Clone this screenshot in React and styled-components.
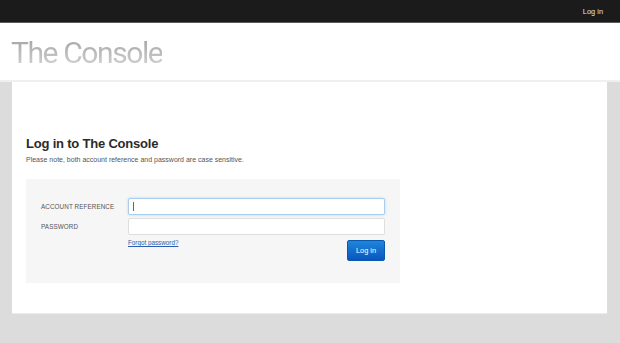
import React from 'react';
import styled, { createGlobalStyle } from 'styled-components';

const GlobalStyle = createGlobalStyle`
  html, body {
    margin: 0;
    padding: 0;
    background: #dcdcdc;
    font-family: "Liberation Sans", Arial, sans-serif;
  }
`

const Page = styled.div`
  min-height: 343px;
  background: #dcdcdc;
`

const TopBar = styled.div`
  height: 22px;
  background: #1b1b1b;
  border-bottom: 1px solid #5a5a5a;
  display: flex;
  align-items: center;
  justify-content: flex-end;
  padding: 0 17px;
`

const TopLink = styled.a`
  color: #e4e4e4;
  font-size: 7.4px;
  text-decoration: none;
`

const Header = styled.div`
  height: 57px;
  background: #fff;
  border-bottom: 2px solid #efefef;
  display: flex;
  align-items: center;
  padding: 0 11px;
`

const Logo = styled.div`
  font-family: Roboto, "Liberation Sans", sans-serif;
  font-weight: 400;
  font-size: 30px;
  letter-spacing: -1.4px;
  line-height: 1;
  margin-top: 2px;
  background: linear-gradient(#a4a4a4, #d4d4d4);
  -webkit-background-clip: text;
  background-clip: text;
  color: transparent;
`

const Panel = styled.div`
  margin: 0 13px 0 12px;
  background: #fff;
  border-bottom: 1px solid #ececec;
  padding: 53px 14px 30px;
`

const Title = styled.h1`
  margin: 0;
  font-size: 13px;
  font-weight: bold;
  color: #2b2b2b;
  letter-spacing: -0.2px;
  line-height: 18px;
`

const Note = styled.p`
  margin: 2px 0 0;
  font-size: 7px;
  color: #555;
  line-height: 10px;
`

const FormBox = styled.form`
  margin-top: 14px;
  width: 374px;
  height: 104px;
  box-sizing: border-box;
  background: #f6f6f6;
  padding: 19px 15px 0;
`

const Row = styled.div`
  display: flex;
  align-items: center;
  margin-bottom: 3px;
`

const Label = styled.label`
  width: 87px;
  flex: none;
  font-size: 6.3px;
  color: #555;
  letter-spacing: 0.1px;
`

const Field = styled.div`
  position: relative;
  flex: 1;
`

const Input = styled.input`
  display: block;
  width: 100%;
  height: 17px;
  box-sizing: border-box;
  border: 1px solid ${p => (p.$focused ? '#a9cdee' : '#dedede')};
  border-radius: 2px;
  box-shadow: ${p => (p.$focused ? '0 0 3px #b8d8f3' : 'none')};
  background: #fff;
  outline: none;
  padding: 0 4px;
`

const Caret = styled.span`
  position: absolute;
  left: 5px;
  top: 4px;
  width: 1px;
  height: 9px;
  background: #666;
`

const Actions = styled.div`
  display: flex;
  justify-content: space-between;
  align-items: flex-start;
  margin-left: 87px;
`

const Forgot = styled.a`
  font-size: 6.3px;
  color: #2a5db0;
  text-decoration: underline;
  margin-top: 1px;
`

const Button = styled.button`
  width: 38px;
  height: 21px;
  margin-top: 2px;
  border: 1px solid #0a57b0;
  border-radius: 2px;
  background: linear-gradient(#1f86d8, #0a55c0);
  color: #fff;
  font-family: "Liberation Sans", Arial, sans-serif;
  font-size: 7.4px;
  padding: 0;
  cursor: pointer;
`

export default function App() {
  return (
    <Page>
      <GlobalStyle />
      <TopBar>
        <TopLink href="#">Log in</TopLink>
      </TopBar>
      <Header>
        <Logo>The Console</Logo>
      </Header>
      <Panel>
        <Title>Log in to The Console</Title>
        <Note>Please note, both account reference and password are case sensitive.</Note>
        <FormBox onSubmit={e => e.preventDefault()}>
          <Row>
            <Label>ACCOUNT REFERENCE</Label>
            <Field>
              <Input $focused type="text" />
              <Caret />
            </Field>
          </Row>
          <Row>
            <Label>PASSWORD</Label>
            <Field>
              <Input type="password" />
            </Field>
          </Row>
          <Actions>
            <Forgot href="#">Forgot password?</Forgot>
            <Button type="submit">Log in</Button>
          </Actions>
        </FormBox>
      </Panel>
    </Page>
  );
}
